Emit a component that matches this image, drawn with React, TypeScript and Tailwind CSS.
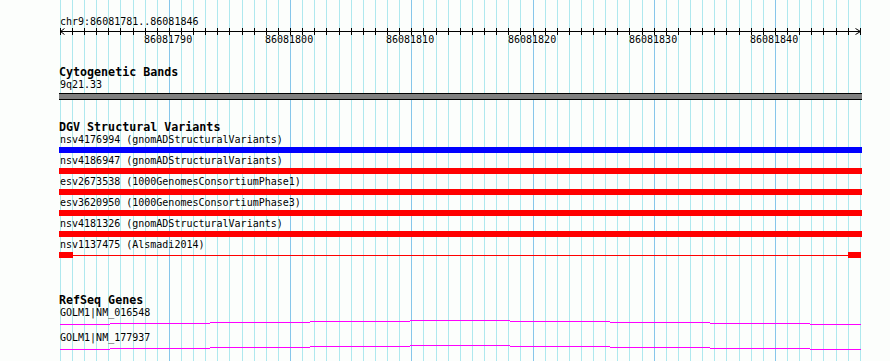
import React from "react";

const N = 66;
const gridX = (i: number) => Math.round(59.8 + (i * 800) / N);
const LEFT = 59;
const W = 803;

const majors = [9, 19, 29, 39, 49, 59];

const geneSegs = [
  [60, 110, 4],
  [110, 210, 3],
  [210, 310, 2],
  [310, 410, 1],
  [410, 510, 0],
  [510, 610, 1],
  [610, 710, 2],
  [710, 810, 3],
  [810, 861, 4],
];

function Grid() {
  const lines = [];
  for (let i = 0; i <= N; i++) {
    lines.push(
      <rect
        key={i}
        x={gridX(i)}
        y={0}
        width={1}
        height={361}
        fill={i % 10 === 9 ? "#86c6ea" : "#aee8ee"}
      />
    );
  }
  return (
    <svg className="absolute inset-0" width={890} height={361} shapeRendering="crispEdges">
      {lines}
    </svg>
  );
}

function Ruler() {
  const ticks = [];
  for (let i = 0; i <= N; i++) {
    ticks.push(<rect key={i} x={gridX(i) - LEFT} y={1} width={1} height={7} fill="#000" />);
  }
  return (
    <div className="relative h-[21px]">
      <svg width={W} height={21} className="absolute left-0 top-0" shapeRendering="crispEdges">
        <rect x={1} y={4} width={801} height={1} fill="#000" />
        {ticks}
        <polyline points="5.5,1.5 1.5,4.5 5.5,7.5" fill="none" stroke="#000" strokeWidth={1} shapeRendering="auto" />
        <polyline points={`${gridX(N) - LEFT - 4.5},1.5 ${gridX(N) - LEFT + 0.5},4.5 ${gridX(N) - LEFT - 4.5},7.5`} fill="none" stroke="#000" strokeWidth={1} shapeRendering="auto" />
      </svg>
      {majors.map((i) => (
        <div
          key={i}
          className="absolute top-[7px] text-[10px] leading-[12px] text-black whitespace-nowrap"
          style={{ left: gridX(i) - LEFT - 25 }}
        >
          {86081781 + i}
        </div>
      ))}
    </div>
  );
}

function Heading({ children }: { children: React.ReactNode }) {
  return (
    <div className="h-[13px]">
      <div className="relative -top-[1px] text-[11.67px] leading-[13px] font-bold text-black whitespace-nowrap">{children}</div>
    </div>
  );
}

function Label({ children }: { children: React.ReactNode }) {
  return (
    <div className="h-[12px]">
      <div className="relative -top-[1px] pl-[1px] text-[10px] leading-[12px] text-black whitespace-nowrap">{children}</div>
    </div>
  );
}

const variants = [
  { label: "nsv4176994 (gnomADStructuralVariants)", color: "bg-[#0000ff]" },
  { label: "nsv4186947 (gnomADStructuralVariants)", color: "bg-[#ff0000]" },
  { label: "esv2673538 (1000GenomesConsortiumPhase1)", color: "bg-[#ff0000]" },
  { label: "esv3620950 (1000GenomesConsortiumPhase3)", color: "bg-[#ff0000]" },
  { label: "nsv4181326 (gnomADStructuralVariants)", color: "bg-[#ff0000]" },
];

function GeneLine() {
  return (
    <svg width={W} height={13} shapeRendering="crispEdges" className="block">
      {geneSegs.map(([a, b, y], k) => (
        <rect key={k} x={a - LEFT} y={y} width={b - a} height={1} fill="#ff00ff" />
      ))}
    </svg>
  );
}

export default function App() {
  return (
    <div className="relative w-[890px] h-[361px] overflow-hidden bg-[#fcfefc] font-['DejaVu_Sans_Mono','Liberation_Mono',monospace]">
      <Grid />
      <div className="relative ml-[59px] w-[803px] pt-[17px] flex flex-col">
        <div className="h-[10px]">
          <div className="relative -top-[1px] pl-[1px] text-[10px] leading-[12px] text-black whitespace-nowrap">
            chr9:86081781..86081846
          </div>
        </div>
        <Ruler />

        <div className="mt-[19px]">
          <Heading>Cytogenetic Bands</Heading>
        </div>
        <Label>9q21.33</Label>
        <div className="mt-[1px] h-[7px] border-y border-black bg-[#808080]" />

        <div className="mt-[22px]">
          <Heading>DGV Structural Variants</Heading>
        </div>
        <div className="flex flex-col gap-[3px]">
          {variants.map((v) => (
            <div key={v.label}>
              <Label>{v.label}</Label>
              <div className={`h-[6px] ${v.color}`} />
            </div>
          ))}
          <div>
            <Label>nsv1137475 (Alsmadi2014)</Label>
            <div className="relative h-[6px] flex items-center">
              <div className="h-[6px] w-[14px] bg-[#ff0000]" />
              <div className="flex-1 h-[1px] bg-[#ff0000]" />
              <div className="h-[6px] w-[13px] bg-[#ff0000] mr-[1px]" />
            </div>
          </div>
        </div>

        <div className="mt-[37px]">
          <Heading>RefSeq Genes</Heading>
        </div>
        <Label>GOLM1|NM_016548</Label>
        <GeneLine />
        <Label>GOLM1|NM_177937</Label>
        <GeneLine />
      </div>
    </div>
  );
}
